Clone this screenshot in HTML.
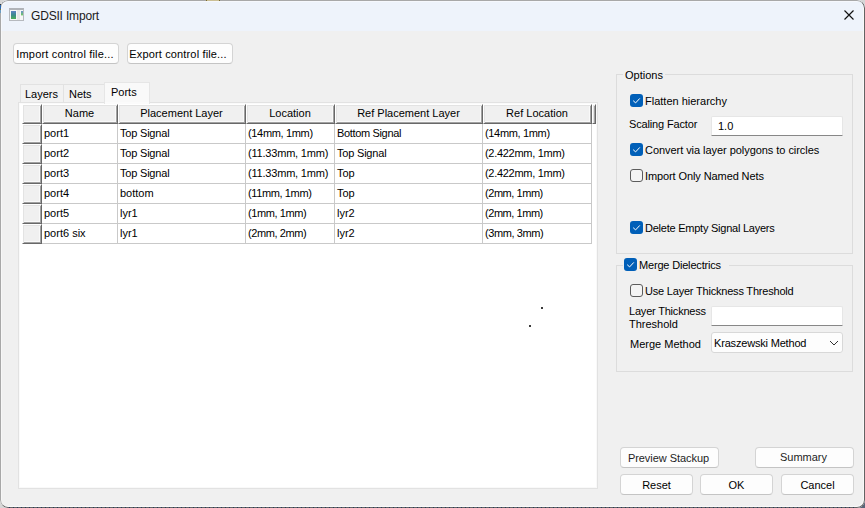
<!DOCTYPE html>
<html><head><meta charset="utf-8">
<style>
*{box-sizing:border-box;margin:0;padding:0}
html,body{width:865px;height:508px;overflow:hidden;background:#d6d6d6}
body{font-family:"Liberation Sans",sans-serif;font-size:11px;color:#000;position:relative}
.win{position:absolute;left:0;top:0;width:865px;height:508px;background:#f0f0f0;border-radius:8px;overflow:hidden}
.frame{position:absolute;left:0;top:0;width:865px;height:508px;border:1px solid;border-color:#a8a8a8 #636363 #636363 #a8a8a8;border-radius:8px;box-shadow:inset 1px 1px 0 rgba(255,255,255,.45),inset -1px -1px 0 #f9f9f9}
.dots{position:absolute;left:8px;top:507px;width:849px;height:1px;background:repeating-linear-gradient(90deg,transparent 0,transparent 1px,#27395a 1px,#27395a 2px,transparent 2px,transparent 4px)}
.title{position:absolute;left:0;top:0;width:865px;height:31px;background:#eef3fb}
.a{position:absolute}
.t{position:absolute;white-space:nowrap;line-height:13px;font-size:11px}
.c{text-align:center}
.btn{position:absolute;background:#fdfdfd;border:1px solid #d4d4d4;border-bottom-color:#c4c4c4;border-radius:4px}
.tab{position:absolute;background:#f2f2f2;border:1px solid #e2e2e2;border-bottom:none}
.hc{position:absolute;background:#f0f0f0;border-left:1px solid #fff;border-top:1px solid #fff;border-right:1px solid #686868;border-bottom:1px solid #686868;box-shadow:inset 1px 1px 0 #e3e3e3,inset -1px -1px 0 #a2a2a2,inset -2px -2px 0 #f9f9f9}
.grp{position:absolute;border:1px solid #dcdcdc}
.cb{position:absolute;width:13px;height:13px;border-radius:3px}
.cb.on{background:#005fb8}
.cb.off{background:#f4f4f4;border:1px solid #5c5c5c}
.edit{position:absolute;background:#fff;border:1px solid #e6e6e6;border-bottom:1px solid #878787;border-radius:2px 2px 0 0}
</style></head><body>
<div class="a" style="left:853px;top:496px;width:12px;height:12px;background:#5a6478"></div>
<div class="win">
<div class="title"></div>

<div class="a" style="left:9px;top:8px;width:15px;height:13px;border:1px solid #b6b9be;border-top:2px solid #b0b3b8;background:#f7f7f7"></div>
<div class="a" style="left:11px;top:11px;width:5px;height:8px;background:linear-gradient(#5e82c4,#3b8a8c 50%,#4cae56)"></div>
<div class="a" style="left:17px;top:10px;width:3px;height:10px;background:#e7e7e7"></div>
<div class="a" style="left:21px;top:11px;width:2px;height:5px;background:linear-gradient(#6a90d0,#6cc070 70%,#e8f4e8)"></div>
<div class="t" style="left:31px;top:9px;font-size:12px;line-height:14px;letter-spacing:-0.18px;color:#1a1a1a">GDSII Import</div>
<svg class="a" style="left:843px;top:9px" width="12" height="12"><path d="M1.5 1.5L10.5 10.5M10.5 1.5L1.5 10.5" stroke="#111" stroke-width="1.15"/></svg>
<div class="btn" style="left:13px;top:43px;width:106px;height:21px"></div>
<div class="t c" style="left:12px;top:48px;width:106px;color:#000;letter-spacing:0.18px">Import control file...</div>
<div class="btn" style="left:127px;top:43px;width:106px;height:21px"></div>
<div class="t c" style="left:125px;top:48px;width:106px;color:#000;letter-spacing:0.15px">Export control file...</div>
<div class="tab" style="left:20px;top:84px;width:44px;height:19px"></div>
<div class="tab" style="left:63px;top:84px;width:42px;height:19px"></div>
<div class="t" style="left:25px;top:88px">Layers</div>
<div class="t" style="left:69px;top:88px">Nets</div>
<div class="a" style="left:18px;top:102px;width:580px;height:387px;background:#fff;border:1px solid #e2e2e2;box-shadow:inset -1px -1px 0 #f9f9f9, inset 1px 1px 0 #fafafa"></div>
<div class="a" style="left:104px;top:82px;width:46px;height:22px;background:#f9f9f9;border:1px solid #e6e6e6;border-bottom:none"></div>
<div class="a" style="left:105px;top:102px;width:44px;height:2px;background:#fbfbfb"></div>
<div class="t" style="left:111px;top:86px">Ports</div>
<div class="hc" style="left:22px;top:104px;width:20px;height:20px"></div>
<div class="hc" style="left:42px;top:104px;width:76px;height:20px"></div>
<div class="hc" style="left:118px;top:104px;width:128px;height:20px"></div>
<div class="hc" style="left:246px;top:104px;width:89px;height:20px"></div>
<div class="hc" style="left:335px;top:104px;width:148px;height:20px"></div>
<div class="hc" style="left:483px;top:104px;width:109px;height:20px"></div>
<div class="hc" style="left:592px;top:104px;width:4px;height:20px"></div>
<div class="t c" style="left:42px;top:107px;width:75px">Name</div>
<div class="t c" style="left:118px;top:107px;width:127px">Placement Layer</div>
<div class="t c" style="left:246px;top:107px;width:88px">Location</div>
<div class="t c" style="left:335px;top:107px;width:147px">Ref Placement Layer</div>
<div class="t c" style="left:483px;top:107px;width:108px">Ref Location</div>
<div class="hc" style="left:22px;top:124px;width:20px;height:20px"></div>
<div class="hc" style="left:22px;top:144px;width:20px;height:20px"></div>
<div class="hc" style="left:22px;top:164px;width:20px;height:20px"></div>
<div class="hc" style="left:22px;top:184px;width:20px;height:20px"></div>
<div class="hc" style="left:22px;top:204px;width:20px;height:20px"></div>
<div class="hc" style="left:22px;top:224px;width:20px;height:20px"></div>
<div class="a" style="left:42px;top:143px;width:550px;height:1px;background:#c9c9c9"></div>
<div class="a" style="left:42px;top:163px;width:550px;height:1px;background:#c9c9c9"></div>
<div class="a" style="left:42px;top:183px;width:550px;height:1px;background:#c9c9c9"></div>
<div class="a" style="left:42px;top:203px;width:550px;height:1px;background:#c9c9c9"></div>
<div class="a" style="left:42px;top:223px;width:550px;height:1px;background:#c9c9c9"></div>
<div class="a" style="left:42px;top:243px;width:550px;height:1px;background:#c9c9c9"></div>
<div class="a" style="left:117px;top:124px;width:1px;height:120px;background:#c9c9c9"></div>
<div class="a" style="left:245px;top:124px;width:1px;height:120px;background:#c9c9c9"></div>
<div class="a" style="left:334px;top:124px;width:1px;height:120px;background:#c9c9c9"></div>
<div class="a" style="left:482px;top:124px;width:1px;height:120px;background:#c9c9c9"></div>
<div class="a" style="left:591px;top:124px;width:1px;height:120px;background:#c9c9c9"></div>
<div class="t" style="left:44px;top:127px;letter-spacing:0px">port1</div>
<div class="t" style="left:120px;top:127px;letter-spacing:-0.2px">Top Signal</div>
<div class="t" style="left:248px;top:127px;letter-spacing:-0.34px">(14mm, 1mm)</div>
<div class="t" style="left:337px;top:127px;letter-spacing:-0.34px">Bottom Signal</div>
<div class="t" style="left:485px;top:127px;letter-spacing:-0.34px">(14mm, 1mm)</div>
<div class="t" style="left:44px;top:147px;letter-spacing:0px">port2</div>
<div class="t" style="left:120px;top:147px;letter-spacing:-0.2px">Top Signal</div>
<div class="t" style="left:248px;top:147px;letter-spacing:-0.2px">(11.33mm, 1mm)</div>
<div class="t" style="left:337px;top:147px;letter-spacing:-0.2px">Top Signal</div>
<div class="t" style="left:485px;top:147px;letter-spacing:-0.29px">(2.422mm, 1mm)</div>
<div class="t" style="left:44px;top:167px;letter-spacing:0px">port3</div>
<div class="t" style="left:120px;top:167px;letter-spacing:-0.2px">Top Signal</div>
<div class="t" style="left:248px;top:167px;letter-spacing:-0.2px">(11.33mm, 1mm)</div>
<div class="t" style="left:337px;top:167px;letter-spacing:0px">Top</div>
<div class="t" style="left:485px;top:167px;letter-spacing:-0.29px">(2.422mm, 1mm)</div>
<div class="t" style="left:44px;top:187px;letter-spacing:0px">port4</div>
<div class="t" style="left:120px;top:187px;letter-spacing:0px">bottom</div>
<div class="t" style="left:248px;top:187px;letter-spacing:-0.38px">(11mm, 1mm)</div>
<div class="t" style="left:337px;top:187px;letter-spacing:0px">Top</div>
<div class="t" style="left:485px;top:187px;letter-spacing:-0.45px">(2mm, 1mm)</div>
<div class="t" style="left:44px;top:207px;letter-spacing:0px">port5</div>
<div class="t" style="left:120px;top:207px;letter-spacing:0px">lyr1</div>
<div class="t" style="left:248px;top:207px;letter-spacing:-0.42px">(1mm, 1mm)</div>
<div class="t" style="left:337px;top:207px;letter-spacing:0px">lyr2</div>
<div class="t" style="left:485px;top:207px;letter-spacing:-0.45px">(2mm, 1mm)</div>
<div class="t" style="left:44px;top:227px;letter-spacing:0px">port6 six</div>
<div class="t" style="left:120px;top:227px;letter-spacing:0px">lyr1</div>
<div class="t" style="left:248px;top:227px;letter-spacing:-0.42px">(2mm, 2mm)</div>
<div class="t" style="left:337px;top:227px;letter-spacing:0px">lyr2</div>
<div class="t" style="left:485px;top:227px;letter-spacing:-0.42px">(3mm, 3mm)</div>
<div class="a" style="left:541px;top:307px;width:2px;height:2px;background:#3a3a3a"></div>
<div class="a" style="left:529px;top:325px;width:2px;height:2px;background:#3a3a3a"></div>
<div class="grp" style="left:616px;top:74px;width:237px;height:180px"></div>
<div class="a" style="left:623px;top:68px;width:42px;height:12px;background:#f0f0f0"></div>
<div class="t" style="left:625px;top:69px">Options</div>
<div class="cb on" style="left:630px;top:94px"><svg width="13" height="13" style="position:absolute;left:0;top:0"><path d="M3.2 6.7L5.6 8.9L9.8 4.4" stroke="#fff" stroke-width="1" fill="none"/></svg></div>
<div class="t" style="left:645px;top:95px">Flatten hierarchy</div>
<div class="t" style="left:629px;top:118px;letter-spacing:-0.15px">Scaling Factor</div>
<div class="edit" style="left:711px;top:116px;width:132px;height:20px"></div>
<div class="t" style="left:718px;top:120px">1.0</div>
<div class="cb on" style="left:630px;top:143px"><svg width="13" height="13" style="position:absolute;left:0;top:0"><path d="M3.2 6.7L5.6 8.9L9.8 4.4" stroke="#fff" stroke-width="1" fill="none"/></svg></div>
<div class="t" style="left:645px;top:144px;letter-spacing:-0.05px">Convert via layer polygons to circles</div>
<div class="cb off" style="left:630px;top:169px"></div>
<div class="t" style="left:645px;top:170px;letter-spacing:-0.1px">Import Only Named Nets</div>
<div class="cb on" style="left:630px;top:221px"><svg width="13" height="13" style="position:absolute;left:0;top:0"><path d="M3.2 6.7L5.6 8.9L9.8 4.4" stroke="#fff" stroke-width="1" fill="none"/></svg></div>
<div class="t" style="left:645px;top:222px;letter-spacing:-0.24px">Delete Empty Signal Layers</div>
<div class="grp" style="left:616px;top:265px;width:237px;height:107px"></div>
<div class="a" style="left:623px;top:257px;width:106px;height:16px;background:#f0f0f0"></div>
<div class="cb on" style="left:624px;top:258px"><svg width="13" height="13" style="position:absolute;left:0;top:0"><path d="M3.2 6.7L5.6 8.9L9.8 4.4" stroke="#fff" stroke-width="1" fill="none"/></svg></div>
<div class="t" style="left:639px;top:259px;letter-spacing:-0.18px">Merge Dielectrics</div>
<div class="cb off" style="left:630px;top:284px"></div>
<div class="t" style="left:645px;top:285px;letter-spacing:-0.2px">Use Layer Thickness Threshold</div>
<div class="t" style="left:629px;top:305px;letter-spacing:-0.2px">Layer Thickness</div>
<div class="t" style="left:629px;top:318px">Threshold</div>
<div class="edit" style="left:711px;top:306px;width:132px;height:20px"></div>
<div class="t" style="left:630px;top:338px">Merge Method</div>
<div class="a" style="left:711px;top:332px;width:132px;height:21px;background:#fdfdfd;border:1px solid #d8d8d8;border-radius:3px"></div>
<div class="t" style="left:714px;top:337px;letter-spacing:-0.18px">Kraszewski Method</div>
<svg class="a" style="left:829px;top:340px" width="11" height="7"><path d="M1 1L5 5L9 1" stroke="#333" stroke-width="1" fill="none"/></svg>
<div class="btn" style="left:620px;top:447px;width:99px;height:21px"></div>
<div class="t c" style="left:619px;top:452px;width:99px;color:#1e1e1e;letter-spacing:-0.05px">Preview Stackup</div>
<div class="btn" style="left:755px;top:447px;width:99px;height:21px"></div>
<div class="t c" style="left:754px;top:451px;width:99px;color:#1e1e1e;letter-spacing:0px">Summary</div>
<div class="btn" style="left:620px;top:474px;width:73px;height:21px"></div>
<div class="t c" style="left:620px;top:479px;width:73px;color:#000;letter-spacing:0px">Reset</div>
<div class="btn" style="left:700px;top:474px;width:73px;height:21px"></div>
<div class="t c" style="left:700px;top:479px;width:73px;color:#000;letter-spacing:0px">OK</div>
<div class="btn" style="left:781px;top:474px;width:73px;height:21px"></div>
<div class="t c" style="left:781px;top:479px;width:73px;color:#000;letter-spacing:0px">Cancel</div>
<div class="frame"></div>
<div class="dots"></div>
<div class="a" style="left:206px;top:0;width:14px;height:1px;background:#cbbf95;border-left:1px solid #7a6a2c;border-right:1px solid #7a6a2c"></div>
</div>
<div class="a" style="left:0;top:4px;width:1px;height:9px;background:linear-gradient(#333 0,#333 11%,#2a6ab0 11%,#2a6ab0 55%,#7a7040 55%,#7a7040 66%,#6a9ac0 66%)"></div>
</body></html>
